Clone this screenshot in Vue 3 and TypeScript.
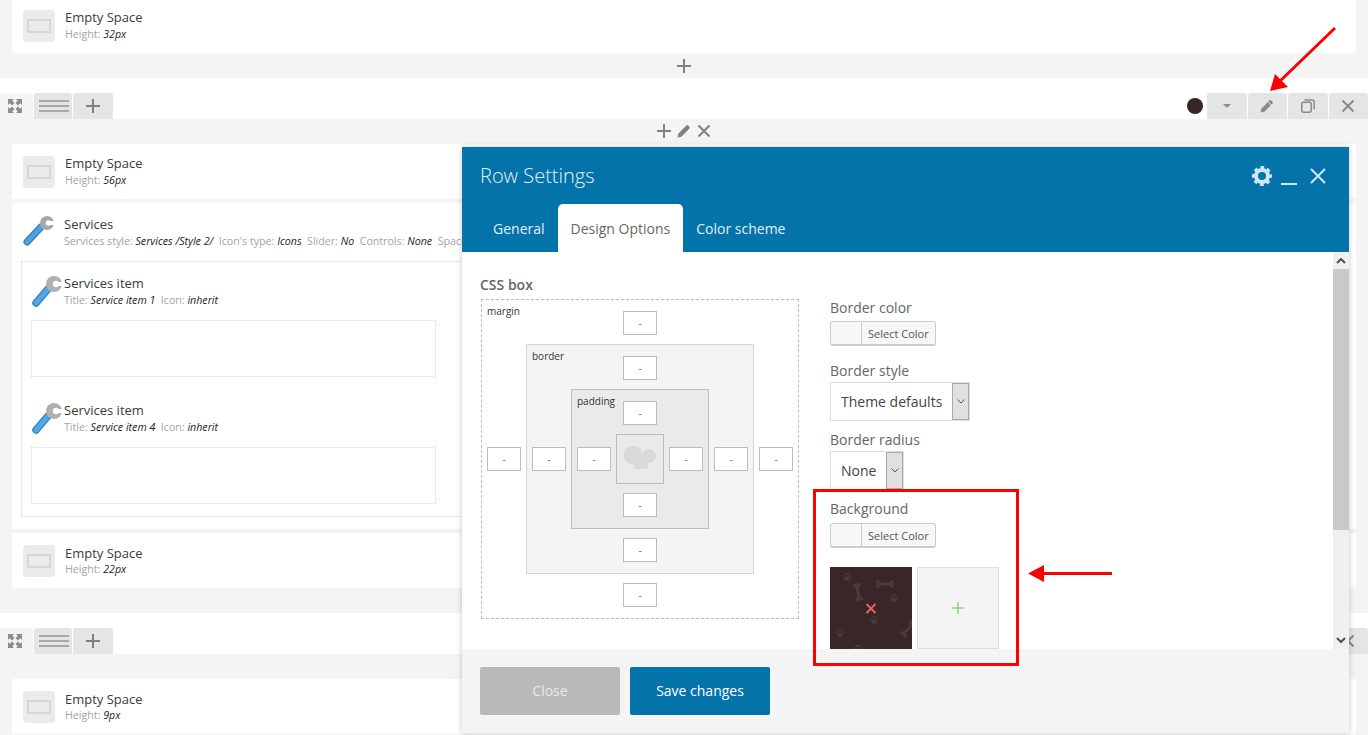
<script setup lang="ts">
// Page builder backend with the Row Settings dialog open over the rows.
type Meta = { label: string; value: string };

const serviceMeta: Meta[] = [
  { label: "Services style", value: "Services /Style 2/" },
  { label: "Icon's type", value: "Icons" },
  { label: "Slider", value: "No" },
  { label: "Controls", value: "None" },
];
const serviceItems = [
  { title: "Service item 1" },
  { title: "Service item 4" },
];
const bones = [
  { x: 885, y: 584, r: 0 },
  { x: 858, y: 592, r: 80 },
  { x: 908, y: 629, r: 130 },
];
const paws = [
  { x: 847, y: 577 },
  { x: 894, y: 598 },
  { x: 874, y: 620 },
  { x: 840, y: 633 },
  { x: 858, y: 649 },
];
</script>

<template>
  <div class="page">
    <!-- row 1 -->
    <div class="card first">
      <span class="es-icon"><i /></span>
      <div class="card-text">
        <div class="title">Empty Space</div>
        <div class="meta"><span>Height:</span> <em>32px</em></div>
      </div>
    </div>
    <div class="add-row">
      <svg width="14" height="14" viewBox="0 0 14 14"><path d="M7 0v14M0 7h14" stroke="#808080" stroke-width="2" /></svg>
    </div>

    <!-- row 2 -->
    <div class="band">
      <div class="tools">
        <span class="expand">
          <svg width="14" height="14" viewBox="0 0 14 14" fill="#8c8c8c">
            <path d="M0 0h6L4.300 1.700 6.500 4 4 6.500 1.700 4.300 0 6zM14 0v6l-1.700-1.700L10 6.500 7.500 4l2.200-2.300L8 0zM0 14V8l1.700 1.700L4 7.500 6.500 10l-2.200 2.300L6 14zM14 14H8l1.700-1.700L7.500 10 10 7.500l2.300 2.200L14 8z" />
          </svg>
        </span>
        <span class="tool handle"><b /><b /><b /></span>
        <span class="tool plus">
          <svg width="14" height="14" viewBox="0 0 14 14"><path d="M7 0v14M0 7h14" stroke="#808080" stroke-width="2" /></svg>
        </span>
      </div>
      <div class="tools">
        <span class="dot" />
        <span class="tool act">
          <svg width="8" height="4" viewBox="0 0 8 4"><path d="M0 0h8L4 4z" fill="#8c8c8c" /></svg>
        </span>
        <span class="tool act">
          <svg width="14" height="14" viewBox="0 0 14 14"><path d="M0.500 13.500l.8-3.800 7.800-8a1.500 1.500 0 0 1 2.200 0l.9.900a1.500 1.500 0 0 1 0 2.200l-7.800 7.900z" fill="#8a8a8a" /><path d="M8.200 3l3 3" stroke="#e5e5e5" /></svg>
        </span>
        <span class="tool act">
          <svg width="14" height="14" viewBox="0 0 14 14" fill="none" stroke="#8a8a8a" stroke-width="1.500"><rect x="0.800" y="3.300" width="9.500" height="9.900" rx="2" /><path d="M3.500 1h7.500a2.200 2.200 0 0 1 2.200 2.200v7" /></svg>
        </span>
        <span class="tool act">
          <svg width="12" height="12" viewBox="0 0 12 12"><path d="M0.500 0.500l11 11M11.500 0.500l-11 11" stroke="#8a8a8a" stroke-width="2" /></svg>
        </span>
      </div>
    </div>
    <div class="col-tools">
      <svg width="14" height="14" viewBox="0 0 14 14"><path d="M7 0v14M0 7h14" stroke="#808080" stroke-width="2" /></svg>
      <svg width="14" height="14" viewBox="0 0 14 14"><path d="M0.500 13.500l.8-3.800 7.800-8a1.500 1.500 0 0 1 2.200 0l.9.900a1.500 1.500 0 0 1 0 2.200l-7.800 7.900z" fill="#808080" /></svg>
      <svg width="14" height="14" viewBox="0 0 14 14"><path d="M1.500 1.500l11 11M12.500 1.500l-11 11" stroke="#808080" stroke-width="2" /></svg>
    </div>
    <div class="card">
      <span class="es-icon"><i /></span>
      <div class="card-text">
        <div class="title">Empty Space</div>
        <div class="meta"><span>Height:</span> <em>56px</em></div>
      </div>
    </div>

    <div class="services">
      <div class="svc-head">
        <svg class="wrench" width="32" height="32" viewBox="0 0 32 32">
          <path d="M5 28L19 13" stroke="#2f7fc0" stroke-width="7" stroke-linecap="round" />
          <path d="M5 28L19 13" stroke="#4da3e2" stroke-width="4.500" stroke-linecap="round" />
          <circle cx="25" cy="9" r="7" fill="#a6a6a6" />
          <circle cx="26.500" cy="9" r="2.800" fill="#fff" />
          <rect x="26.500" y="7" width="6" height="4" fill="#fff" />
        </svg>
        <div class="svc-text">
          <div class="title">Services</div>
          <div class="meta">
            <template v-for="m in serviceMeta" :key="m.label">
              <span>{{ m.label }}:</span> <em>{{ m.value }}</em>&nbsp;
            </template>
            <span>Spacing</span>
          </div>
        </div>
      </div>
      <div class="svc-items">
        <div v-for="item in serviceItems" :key="item.title" class="svc-item">
          <div class="item-head">
            <svg class="wrench small" width="33" height="34" viewBox="0 0 33 34">
              <path d="M5 29L17 15" stroke="#3a88c8" stroke-width="7.500" stroke-linecap="round" />
              <path d="M5 29L17 15" stroke="#53a7e4" stroke-width="4.500" stroke-linecap="round" />
              <circle cx="23" cy="10" r="8" fill="#b0b0b0" />
              <circle cx="25" cy="10" r="3.200" fill="#fff" />
              <rect x="25" y="8" width="8" height="4" fill="#fff" />
            </svg>
            <div class="item-text">
              <div class="title">Services item</div>
              <div class="meta"><span>Title:</span> <em>{{ item.title }}</em>&nbsp; <span>Icon:</span> <em>inherit</em></div>
            </div>
          </div>
          <div class="item-box" />
        </div>
      </div>
    </div>

    <div class="card mid low">
      <span class="es-icon"><i /></span>
      <div class="card-text">
        <div class="title">Empty Space</div>
        <div class="meta"><span>Height:</span> <em>22px</em></div>
      </div>
    </div>

    <!-- row 3 -->
    <div class="band gap-top">
      <div class="tools">
        <span class="expand">
          <svg width="14" height="14" viewBox="0 0 14 14" fill="#8c8c8c">
            <path d="M0 0h6L4.300 1.700 6.500 4 4 6.500 1.700 4.300 0 6zM14 0v6l-1.700-1.700L10 6.500 7.500 4l2.200-2.300L8 0zM0 14V8l1.700 1.700L4 7.500 6.500 10l-2.200 2.300L6 14zM14 14H8l1.700-1.700L7.500 10 10 7.500l2.300 2.200L14 8z" />
          </svg>
        </span>
        <span class="tool handle"><b /><b /><b /></span>
        <span class="tool plus">
          <svg width="14" height="14" viewBox="0 0 14 14"><path d="M7 0v14M0 7h14" stroke="#808080" stroke-width="2" /></svg>
        </span>
      </div>
      <div class="tools">
        <span class="tool act">
          <svg width="12" height="12" viewBox="0 0 12 12"><path d="M0.500 0.500l11 11M11.500 0.500l-11 11" stroke="#8a8a8a" stroke-width="2" /></svg>
        </span>
      </div>
    </div>
    <div class="col-tools" />
    <div class="card low">
      <span class="es-icon"><i /></span>
      <div class="card-text">
        <div class="title">Empty Space</div>
        <div class="meta"><span>Height:</span> <em>9px</em></div>
      </div>
    </div>

    <!-- dialog -->
    <section class="modal">
      <header class="m-head">
        <div class="m-title">
          <h2>Row Settings</h2>
          <div class="m-icons">
            <svg width="20" height="20" viewBox="0 0 20 20" fill="none" stroke="#cfe8f5">
              <circle cx="10" cy="10" r="6" stroke-width="4" />
              <circle cx="10" cy="10" r="8.500" stroke-width="3" stroke-dasharray="3.700 2.976" stroke-dashoffset="1.850" />
            </svg>
            <span class="minimize" />
            <svg width="16" height="16" viewBox="0 0 16 16"><path d="M1 1l14 14M15 1L1 15" stroke="#cfe8f5" stroke-width="2" /></svg>
          </div>
        </div>
        <nav class="m-tabs">
          <a>General</a>
          <a class="active">Design Options</a>
          <a>Color scheme</a>
        </nav>
      </header>

      <div class="m-body">
        <div class="left">
          <h4>CSS box</h4>
          <div class="box margin">
            <label>margin</label>
            <span class="inp top">-</span>
            <span class="inp">-</span>
            <div class="box border">
              <label>border</label>
              <span class="inp top">-</span>
              <span class="inp">-</span>
              <div class="box padding">
                <label>padding</label>
                <span class="inp top">-</span>
                <span class="inp">-</span>
                <div class="content">
                  <svg width="36" height="28" viewBox="0 0 36 28" fill="#d9d9d9">
                    <circle cx="11" cy="10" r="9.500" />
                    <circle cx="27" cy="11" r="7" />
                    <rect x="12" y="12" width="14" height="12" rx="2" />
                  </svg>
                </div>
                <span class="inp">-</span>
                <span class="inp bottom">-</span>
              </div>
              <span class="inp">-</span>
              <span class="inp bottom">-</span>
            </div>
            <span class="inp">-</span>
            <span class="inp bottom">-</span>
          </div>
        </div>

        <div class="right">
          <div class="lbl">Border color</div>
          <div class="color-btn"><span /><b>Select Color</b></div>
          <div class="lbl style">Border style</div>
          <div class="select wide">
            <span>Theme defaults</span>
            <i><svg width="8" height="5" viewBox="0 0 8 5"><path d="M0.500 0.500L4 4l3.500-3.500" fill="none" stroke="#555" /></svg></i>
          </div>
          <div class="lbl radius">Border radius</div>
          <div class="select narrow">
            <span>None</span>
            <i><svg width="8" height="5" viewBox="0 0 8 5"><path d="M0.500 0.500L4 4l3.500-3.500" fill="none" stroke="#555" /></svg></i>
          </div>
          <div class="lbl radius">Background</div>
          <div class="color-btn bg"><span /><b>Select Color</b></div>
          <div class="thumbs">
            <div class="thumb dark">
              <svg width="82" height="82" viewBox="830 567 82 82">
                <g v-for="(b, i) in bones" :key="'b' + i" :transform="`translate(${b.x} ${b.y}) rotate(${b.r})`" fill="#4b3a3c">
                  <rect x="-6" y="-1.500" width="12" height="3" />
                  <circle cx="-7" cy="-2" r="2" /><circle cx="-7" cy="2" r="2" />
                  <circle cx="7" cy="-2" r="2" /><circle cx="7" cy="2" r="2" />
                </g>
                <g v-for="(p, i) in paws" :key="'p' + i" :transform="`translate(${p.x} ${p.y})`" fill="#4b3a3c">
                  <ellipse cx="0" cy="1.500" rx="2.800" ry="2.300" />
                  <circle cx="-3.200" cy="-1" r="1.100" /><circle cx="-1.100" cy="-2.800" r="1.100" />
                  <circle cx="1.200" cy="-2.800" r="1.100" /><circle cx="3.200" cy="-1" r="1.100" />
                </g>
                <path d="M866.500 604l9 9M875.500 604l-9 9" stroke="#f0605f" stroke-width="1.800" />
              </svg>
            </div>
            <div class="thumb add">
              <svg width="12" height="12" viewBox="0 0 12 12"><path d="M6 0v12M0 6h12" stroke="#8ed37f" stroke-width="1.500" /></svg>
            </div>
          </div>
        </div>

        <div class="scrollbar">
          <svg width="10" height="6" viewBox="0 0 10 6"><path d="M1 5l4-4 4 4" fill="none" stroke="#505050" stroke-width="2" /></svg>
          <span class="thumb-bar" />
          <svg class="down" width="10" height="6" viewBox="0 0 10 6"><path d="M1 1l4 4 4-4" fill="none" stroke="#505050" stroke-width="2" /></svg>
        </div>
      </div>

      <footer class="m-foot">
        <button class="btn close" type="button">Close</button>
        <button class="btn save" type="button">Save changes</button>
      </footer>
    </section>

    <!-- annotations drawn on the screenshot -->
    <svg class="marks" width="1368" height="735" viewBox="0 0 1368 735">
      <path d="M1335 28L1278 83" stroke="#f00" stroke-width="3" fill="none" />
      <path d="M1270 91L1275 74L1288 87z" fill="#f00" />
      <path d="M1112 573.500H1042" stroke="#f00" stroke-width="3" fill="none" />
      <path d="M1028 573.500L1044 565V582z" fill="#f00" />
      <rect x="814.500" y="490.500" width="203" height="174" fill="none" stroke="#f00" stroke-width="3" />
    </svg>
  </div>
</template>

<style scoped>
.page {
  position: relative;
  height: 735px;
  overflow: hidden;
  background: #f4f4f4;
  font-family: "Open Sans", "Noto Sans", sans-serif;
  color: #333;
}
.card {
  display: flex;
  align-items: center;
  gap: 10px;
  height: 55px;
  margin: 0 12px;
  padding-left: 11px;
  background: #fff;
  border-radius: 2px;
}
.card.first {
  margin-top: -2px;
}
.card.mid {
  margin-top: 4px;
}
.card-text {
  padding-bottom: 1px;
}
.card.low .title {
  margin: 1px 0 -1px;
}
.es-icon {
  display: flex;
  align-items: center;
  justify-content: center;
  width: 32px;
  height: 32px;
  background: #ebebeb;
  border-radius: 4px;
  flex: none;
}
.es-icon i {
  width: 24px;
  height: 14px;
  border: 2px solid #d6d6d6;
  box-sizing: border-box;
}
.title {
  font-size: 13px;
  line-height: 17px;
  color: #3a3a3a;
}
.meta {
  margin: 1px 0 -1px;
  font-size: 10.650px;
  line-height: 15px;
  white-space: nowrap;
  color: #a3a3a3;
}
.meta em {
  color: #222;
}
.add-row {
  display: flex;
  align-items: center;
  justify-content: center;
  height: 25px;
}
.band {
  display: flex;
  align-items: flex-end;
  justify-content: space-between;
  height: 41px;
  background: #fff;
}
.band.gap-top {
  margin-top: 25px;
}
.tools {
  display: flex;
  align-items: stretch;
  gap: 1px;
  height: 26px;
}
.expand {
  display: flex;
  align-items: center;
  justify-content: center;
  width: 33px;
  padding-right: 3px;
  box-sizing: border-box;
  background: #f4f4f4;
  border-radius: 3px 3px 0 0;
}
.tool {
  display: flex;
  align-items: center;
  justify-content: center;
  width: 39.500px;
  background: #e5e5e5;
  border-radius: 3px 3px 0 0;
}
.plus {
  width: 40px;
}
.handle {
  flex-direction: column;
  width: 38px;
  gap: 3px;
}
.handle b {
  display: block;
  width: 30px;
  height: 2px;
  margin-left: 2px;
  background: #a8a8a8;
}
.dot {
  align-self: center;
  width: 16px;
  height: 16px;
  margin-right: 3px;
  border-radius: 50%;
  background: #392528;
}
.col-tools {
  display: flex;
  align-items: center;
  justify-content: center;
  gap: 6px;
  height: 25px;
  padding: 0 0 1px;
  box-sizing: border-box;
}
.services {
  height: 326px;
  margin: 4px 12px 0;
  padding: 11px 9px 0;
  background: #fff;
  box-sizing: border-box;
  overflow: hidden;
}
.svc-head {
  display: flex;
  gap: 10px;
  height: 47px;
  margin-left: 1px;
}
.svc-text {
  width: 398px;
  overflow: hidden;
}
.svc-text .title {
  margin-top: 2px;
}
.svc-items {
  height: 256px;
  border: 1px dotted #d8d8d8;
  box-sizing: border-box;
}
.svc-item {
  width: 425px;
  height: 127px;
  padding: 12px 0 0 9px;
  box-sizing: border-box;
}
.item-head {
  display: flex;
  height: 46px;
}
.wrench.small {
  flex: none;
}
.item-text {
  padding-top: 1px;
}
.item-box {
  width: 405px;
  height: 57px;
  border: 1px dotted #d8d8d8;
  box-sizing: border-box;
}
.modal {
  position: absolute;
  left: 462px;
  top: 147px;
  width: 887px;
  height: 586px;
  display: flex;
  flex-direction: column;
  background: #fff;
  box-shadow: 0 0 6px rgba(0, 0, 0, 0.22);
}
.m-head {
  height: 105px;
  background: #0473aa;
  flex: none;
}
.m-title {
  display: flex;
  align-items: center;
  justify-content: space-between;
  height: 57px;
  padding: 0 23px 1px 18px;
  box-sizing: border-box;
}
.m-title h2 {
  margin: 0;
  font-size: 20px;
  font-weight: 300;
  color: #e6f2f8;
}
.m-icons {
  display: flex;
  align-items: center;
  gap: 9px;
  margin-top: 2px;
}
.minimize {
  width: 16px;
  height: 2px;
  margin: 15px 4px 0 0;
  background: #cfe8f5;
}
.m-tabs {
  display: flex;
  height: 48px;
  padding-left: 18px;
  font-size: 14px;
  color: #e3f0f7;
}
.m-tabs a {
  padding: 0 13px;
  line-height: 50px;
}
.m-tabs a.active {
  background: #fff;
  color: #666;
  border-radius: 5px 5px 0 0;
}
.m-body {
  position: relative;
  display: flex;
  flex: none;
  height: 397px;
  overflow: hidden;
  padding-left: 19px;
  background: #fff;
}
.left {
  width: 318px;
  flex: none;
}
.left h4 {
  margin: 0 0 0 -1px;
  padding-top: 23px;
  height: 24px;
  font-size: 14px;
  line-height: 20px;
  font-weight: 600;
  color: #666;
}
.box {
  position: relative;
  display: grid;
  grid-template-columns: 34px 1fr 34px;
  row-gap: 9px;
  column-gap: 5px;
  padding: 11px 5px;
  box-sizing: border-box;
  justify-items: center;
  align-items: center;
}
.box label {
  position: absolute;
  left: 5px;
  top: 5px;
  font-size: 10px;
  line-height: 12px;
  color: #333;
}
.box .top,
.box .bottom {
  grid-column: 1 / -1;
}
.margin {
  width: 318px;
  height: 320px;
  border: 1px dashed #bbb;
}
.border {
  width: 228px;
  height: 230px;
  background: #f4f4f4;
  border: 1px solid #d5d5d5;
}
.padding {
  width: 138px;
  height: 140px;
  background: #eaeaea;
  border: 1px solid #bcbcbc;
}
.content {
  display: flex;
  align-items: center;
  justify-content: center;
  width: 48px;
  height: 50px;
  border: 1px solid #bcbcbc;
  box-sizing: border-box;
}
.inp {
  display: block;
  width: 34px;
  height: 24px;
  background: #fff;
  border: 1px solid #bcbcbc;
  box-sizing: border-box;
  font-size: 10px;
  line-height: 23px;
  text-align: center;
  color: #666;
}
.right {
  margin-left: 31px;
  padding-top: 46px;
  width: 210px;
}
.lbl {
  font-size: 14px;
  line-height: 20px;
  color: #666;
}
.lbl.style {
  margin-top: 15px;
}
.lbl.radius {
  margin-top: 9px;
}
.color-btn {
  display: flex;
  width: 106px;
  height: 25px;
  margin-top: 3px;
  box-sizing: border-box;
  background: #f7f7f7;
  border: 1px solid #ccc;
  border-bottom-width: 2px;
  border-radius: 3px;
}
.color-btn.bg {
  margin-top: 4px;
}
.color-btn span {
  width: 30px;
  border-right: 1px solid #ccc;
}
.color-btn b {
  font-weight: 400;
  font-size: 11px;
  line-height: 23px;
  margin-left: 6px;
  color: #555;
}
.select {
  display: flex;
  height: 39px;
  box-sizing: border-box;
  border: 1px solid #ddd;
  font-size: 14px;
  line-height: 37px;
  color: #444;
}
.select.wide {
  width: 140px;
  margin-top: 1px;
}
.select.narrow {
  width: 74px;
  margin-top: 1px;
}
.select span {
  flex: 1;
  padding-left: 10px;
}
.select i {
  display: flex;
  align-items: center;
  justify-content: center;
  width: 17px;
  background: #e0e0e0;
  border: 1px solid #aaa;
  box-sizing: border-box;
}
.thumbs {
  display: flex;
  gap: 5px;
  margin-top: 19px;
}
.thumb {
  display: flex;
  align-items: center;
  justify-content: center;
  width: 82px;
  height: 82px;
  flex: none;
  box-sizing: border-box;
}
.thumb.dark {
  background: #392628;
}
.thumb.add {
  background: #f4f4f4;
  border: 1px solid #ddd;
}
.scrollbar {
  position: absolute;
  right: 0;
  top: 0;
  bottom: 0;
  width: 16px;
  display: flex;
  flex-direction: column;
  align-items: center;
  padding-top: 6px;
  box-sizing: border-box;
  background: #f0f0f0;
}
.thumb-bar {
  align-self: stretch;
  height: 261px;
  margin-top: 5px;
  background: #c9c9c9;
}
.scrollbar .down {
  position: absolute;
  bottom: 6px;
}
.m-foot {
  display: flex;
  gap: 10px;
  flex: 1;
  padding: 18px 18px 0;
  background: #f4f4f4;
}
.btn {
  width: 140px;
  height: 48px;
  padding: 0 0 2px;
  border: 0;
  border-radius: 2px;
  font: 14px "Open Sans", "Noto Sans", sans-serif;
  color: #fff;
}
.close {
  background: #b9b9b9;
  color: #e8e8e8;
}
.save {
  background: #0473aa;
}
.marks {
  position: absolute;
  left: 0;
  top: 0;
  pointer-events: none;
}
</style>
